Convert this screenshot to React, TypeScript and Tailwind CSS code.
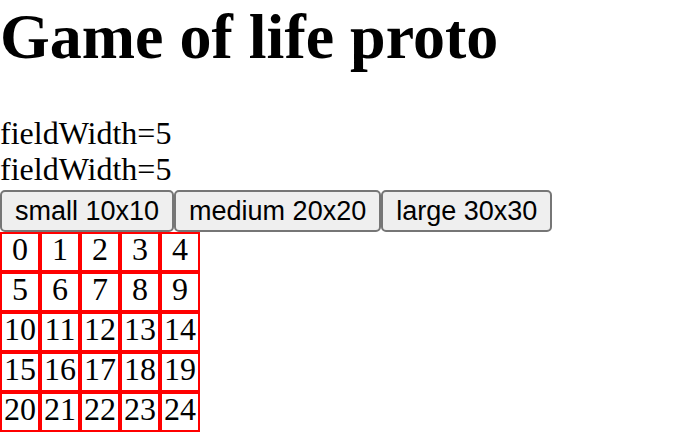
const sizes = ["small 10x10", "medium 20x20", "large 30x30"];
const fieldWidth = 5;
const cells = Array.from({ length: fieldWidth * fieldWidth }, (_, i) => i);

export default function App() {
  return (
    <main className="bg-white font-['Liberation_Serif',serif] text-[32px] leading-9 text-black">
      <h1 className="mb-[42px] text-[64px] leading-[73px] font-bold">Game of life proto</h1>
      <div>fieldWidth={fieldWidth}</div>
      <div>fieldWidth={fieldWidth}</div>
      <div className="mt-[3px] flex">
        {sizes.map((size) => (
          <button
            key={size}
            type="button"
            className="h-[42px] rounded-[5px] border-2 border-[#767676] bg-[#efefef] px-[13px] font-['Liberation_Sans',sans-serif] text-[27px] leading-9 whitespace-nowrap"
          >
            {size}
          </button>
        ))}
      </div>
      <div className="grid w-max grid-cols-[repeat(5,40px)]">
        {cells.map((cell) => (
          <div key={cell} className="h-10 border-2 border-[#ff0000] text-center leading-[30px]">
            {cell}
          </div>
        ))}
      </div>
    </main>
  );
}
